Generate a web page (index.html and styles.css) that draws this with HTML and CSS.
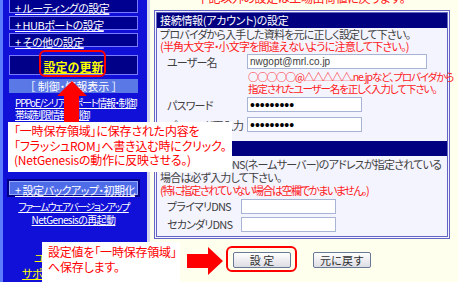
FILE: index.html
```html
<!DOCTYPE html>
<html lang="ja">

<head>
    <meta charset="UTF-8">
    <title>接続情報の設定</title>
    <link rel="stylesheet" href="styles.css">
</head>

<body>
    <div class="page">
        <div class="side">
            <div class="menu">
                <div class="menu-item"><a href="#">+ ルーティングの設定</a></div>
                <div class="menu-item"><a href="#">+ HUBポートの設定</a></div>
                <div class="menu-item"><a href="#">+ その他の設定</a></div>
            </div>
            <div class="update-box"><a href="#">設定の更新</a></div>
            <div class="section-bar">［ 制御・情報表示 ］</div>
            <div class="info-links">
                <a href="#">PPPoE/シリアルポート情報・制御</a>
                <a href="#">帯域制限情報・制御</a>
            </div>
            <div class="menu-item light"><a href="#">+ 設定バックアップ・初期化</a></div>
            <div class="sub-links">
                <a class="narrow" href="#">ファームウェアバージョンアップ</a>
                <a href="#">NetGenesisの再起動</a>
            </div>
            <div class="support-links">
                <span class="support-title">ユーザーサポート</span>
                <a href="#">サポートページへ</a>
            </div>
        </div>

        <div class="main">
            <p class="top-note">下記以外の設定は工場出荷値に戻ります。</p>
            <div class="panel">
                <div class="panel-head">接続情報(アカウント)の設定</div>
                <div class="panel-body account">
                    <p>プロバイダから入手した資料を元に正しく設定して下さい。</p>
                    <p class="red">(半角大文字・小文字を間違えないように注意して下さい。)</p>
                    <div class="field">
                        <label>ユーザー名</label>
                        <input class="wide" type="text" value="nwgopt@mrl.co.jp">
                    </div>
                    <p class="red hint">○○○○○@△△△△△.ne.jpなど、プロバイダから<br>指定されたユーザー名を正しく入力して下さい。</p>
                    <div class="field">
                        <label>パスワード</label>
                        <input class="mid" type="password" value="abcdefghi">
                    </div>
                    <div class="field last">
                        <label>パスワード再入力</label>
                        <input class="mid" type="password" value="abcdefghi">
                    </div>
                </div>
                <div class="panel-head">DNSの設定</div>
                <div class="panel-body dns-body">
                    <p>プロバイダからDNS(ネームサーバー)のアドレスが指定されている<br>場合は必ず入力して下さい。</p>
                    <p class="red">(特に指定されていない場合は空欄でかまいません。)</p>
                    <div class="field dns">
                        <label>プライマリDNS</label>
                        <input class="short" type="text">
                    </div>
                    <div class="field dns">
                        <label>セカンダリDNS</label>
                        <input class="short" type="text">
                    </div>
                </div>
            </div>
            <div class="buttons">
                <button class="btn">設 定</button>
                <button class="btn">元に戻す</button>
            </div>
        </div>

        <!-- annotations over the screenshot -->
        <div class="ring ring-update"></div>
        <div class="ring ring-submit"></div>
        <svg class="arrow arrow-up" width="32" height="42" viewBox="0 0 32 42">
            <polygon points="16,0 31,15 23,15 23,42 8,42 8,15 1,15" fill="#ff0000" />
        </svg>
        <svg class="arrow arrow-right" width="36" height="28" viewBox="0 0 36 28">
            <polygon points="36,14 21,0 21,7 0,7 0,21 21,21 21,28" fill="#ff0000" />
        </svg>
        <div class="callout callout-flash">「一時保存領域」に保存された内容を<br>「フラッシュROM」へ書き込む時にクリック。<br>(NetGenesisの動作に反映させる。)</div>
        <div class="callout callout-save">設定値を「一時保存領域」<br>へ保存します。</div>
    </div>
</body>

</html>
```

FILE: styles.css
```css
body {
    margin: 0;
    font-family: "Noto Sans CJK JP", sans-serif;
    font-feature-settings: "palt";
    background-color: #ffffee;
}

p {
    margin: 0;
}

.page {
    position: relative;
    display: flex;
    width: 458px;
    height: 282px;
    overflow: hidden;
    white-space: nowrap;
}

/* sidebar */

.side {
    width: 150px;
    flex-shrink: 0;
    background-color: #1010d8;
    border-left: 3px solid #5c7cff;
    border-right: 3px solid #d4d4ee;
    padding: 0 9px 0 6px;
    box-sizing: border-box;
}

.side a {
    color: #ffffff;
    font-size: 11px;
    letter-spacing: -0.5px;
}

.menu {
    display: flex;
    flex-direction: column;
    gap: 3px;
    margin-top: -1px;
}

.menu-item {
    height: 12px;
    line-height: 12px;
    background-color: #000090;
    border: 1px solid #7a7aff;
    padding-left: 5px;
}

.menu-item.light {
    margin-top: 60px;
    background-color: #4f6ce8;
    border-color: #94aaff;
    box-shadow: 0 0 0 2px #000088;
}

.update-box {
    margin-top: 8px;
    height: 18px;
    line-height: 18px;
    background-color: #000088;
    border: 1px solid #7a7aff;
    text-align: center;
}

.update-box a {
    color: #ffff00;
    font-weight: bold;
    font-size: 12px;
    letter-spacing: 0;
}

.section-bar {
    margin-top: 4px;
    height: 14px;
    line-height: 14px;
    background-color: #5a78e6;
    color: #ffffff;
    font-size: 11px;
    text-align: center;
}

.info-links,
.sub-links,
.support-links {
    display: flex;
    flex-direction: column;
}

.info-links {
    margin-top: 4px;
    padding-left: 6px;
    line-height: 12px;
    align-items: flex-start;
}

.info-links a,
.sub-links a {
    font-size: 10px;
    letter-spacing: -0.6px;
}

.info-links a {
    letter-spacing: -1.2px;
}

.sub-links a.narrow {
    letter-spacing: -1.5px;
}

.sub-links {
    margin-top: 5px;
    align-items: center;
    line-height: 13px;
}

.support-links {
    margin-top: 25px;
    line-height: 15px;
    align-items: flex-start;
}

.support-title {
    color: #ffff00;
    font-size: 11px;
    padding-left: 25px;
}

.support-links a {
    color: #ffff00;
    padding-left: 13px;
}

/* main column */

.main {
    flex: 1;
    padding-left: 4px;
}

.top-note {
    color: #ff2020;
    font-size: 12px;
    letter-spacing: -0.4px;
    line-height: 13px;
    margin-top: -9px;
    padding-left: 43px;
    height: 19px;
}

.panel {
    width: 296px;
    border: 3px double #6464c4;
    background-color: #f4f4ff;
    box-sizing: border-box;
}

.panel-head {
    height: 15px;
    line-height: 15px;
    background-color: #000080;
    color: #ffffff;
    font-size: 11px;
    letter-spacing: -0.3px;
    padding-left: 3px;
}

.panel-body {
    padding: 0 3px;
    font-size: 11px;
    letter-spacing: -0.8px;
    line-height: 12px;
    color: #404040;
}

.panel-body.account {
    padding-bottom: 6px;
}

.panel-body.dns-body {
    padding-top: 2px;
    padding-bottom: 3px;
    line-height: 13px;
}

.dns-body .red {
    letter-spacing: -1.5px;
}

.red {
    color: #ff2020;
}

.field {
    display: flex;
    align-items: center;
    height: 19px;
}

.field.last {
    height: 21px;
}

.field.dns {
    height: 18px;
}

.field label {
    width: 87px;
    padding-left: 7px;
    box-sizing: border-box;
}

.field.dns label {
    width: 81px;
}

.field input {
    height: 15px;
    border: 1px solid #a8b4d4;
    padding: 0 2px;
    box-sizing: border-box;
    font-family: "Liberation Sans", sans-serif;
    font-size: 10px;
    color: #404040;
    letter-spacing: 0;
}

.field input[type="password"] {
    font-size: 14px;
    color: #000000;
}

.wide {
    width: 180px;
}

.mid {
    width: 115px;
}

.short {
    width: 95px;
}

.hint {
    padding-left: 88px;
    font-size: 10.5px;
    letter-spacing: -1.1px;
}

.buttons {
    display: flex;
    gap: 22px;
    padding: 13px 0 0 79px;
}

.btn {
    width: 58px;
    height: 16px;
    padding: 0;
    border: 1px solid #6a7898;
    border-radius: 2px;
    background: linear-gradient(#ffffff, #dcdce4);
    font-family: "Noto Sans CJK JP", sans-serif;
    font-size: 11px;
    line-height: 14px;
    color: #303030;
}

/* annotations */

.ring {
    position: absolute;
    border: 2px solid #ff0000;
    border-radius: 6px;
}

.ring-update {
    left: 39px;
    top: 50px;
    width: 63px;
    height: 23px;
}

.ring-submit {
    left: 226px;
    top: 246px;
    width: 67px;
    height: 22px;
}

.arrow {
    position: absolute;
}

.arrow-up {
    left: 56px;
    top: 81px;
}

.arrow-right {
    left: 187px;
    top: 247px;
}

.callout {
    position: absolute;
    background-color: #ffffff;
    color: #ff0000;
    font-size: 12px;
    letter-spacing: -0.2px;
    line-height: 14.5px;
    box-sizing: border-box;
}

.callout-flash {
    left: 8px;
    top: 122px;
    width: 224px;
    height: 50px;
    padding: 2px 0 0 6px;
}

.callout-save {
    left: 42px;
    top: 242px;
    width: 138px;
    height: 40px;
    padding: 3px 0 0 6px;
}
```
